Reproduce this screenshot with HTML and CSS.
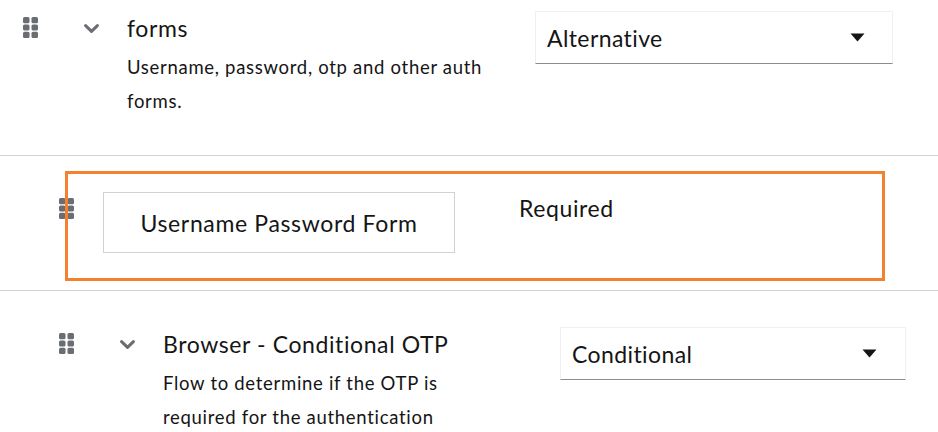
FILE: index.html
```html
<!DOCTYPE html>
<html lang="en">
<head>
<meta charset="utf-8">
<title>Flow</title>
<link rel="stylesheet" href="styles.css">
</head>
<body>
<ul class="flow-list">
  <li class="row row-top">
    <span class="drag">
      <svg width="15" height="21" viewBox="0 0 15 21"><rect x="0" y="0" width="6.5" height="6.2" rx="1.5"/><rect x="8.5" y="0" width="6.5" height="6.2" rx="1.5"/><rect x="0" y="7.4" width="6.5" height="6.2" rx="1.5"/><rect x="8.5" y="7.4" width="6.5" height="6.2" rx="1.5"/><rect x="0" y="14.8" width="6.5" height="6.2" rx="1.5"/><rect x="8.5" y="14.8" width="6.5" height="6.2" rx="1.5"/></svg>
    </span>
    <span class="toggle">
      <svg width="15" height="9" viewBox="0 0 15 9"><path d="M1.6 1.6 L7.5 7.3 L13.4 1.6" fill="none" stroke-width="3" stroke-linecap="round" stroke-linejoin="round"/></svg>
    </span>
    <div class="text text-top">
      <div class="title">forms</div>
      <div class="desc">Username, password, otp and other auth forms.</div>
    </div>
    <div class="select select-top">
      <span>Alternative</span>
      <svg class="caret" width="15" height="9" viewBox="0 0 15 9"><path d="M0.5 0.5 H14.5 L7.5 8.6 Z"/></svg>
    </div>
  </li>
  <li class="row row-mid">
    <span class="drag">
      <svg width="15" height="21" viewBox="0 0 15 21"><rect x="0" y="0" width="6.5" height="6.2" rx="1.5"/><rect x="8.5" y="0" width="6.5" height="6.2" rx="1.5"/><rect x="0" y="7.4" width="6.5" height="6.2" rx="1.5"/><rect x="8.5" y="7.4" width="6.5" height="6.2" rx="1.5"/><rect x="0" y="14.8" width="6.5" height="6.2" rx="1.5"/><rect x="8.5" y="14.8" width="6.5" height="6.2" rx="1.5"/></svg>
    </span>
    <div class="exec-name">Username Password Form</div>
    <div class="req">Required</div>
  </li>
  <li class="row row-bottom">
    <span class="drag">
      <svg width="15" height="21" viewBox="0 0 15 21"><rect x="0" y="0" width="6.5" height="6.2" rx="1.5"/><rect x="8.5" y="0" width="6.5" height="6.2" rx="1.5"/><rect x="0" y="7.4" width="6.5" height="6.2" rx="1.5"/><rect x="8.5" y="7.4" width="6.5" height="6.2" rx="1.5"/><rect x="0" y="14.8" width="6.5" height="6.2" rx="1.5"/><rect x="8.5" y="14.8" width="6.5" height="6.2" rx="1.5"/></svg>
    </span>
    <span class="toggle">
      <svg width="15" height="9" viewBox="0 0 15 9"><path d="M1.6 1.6 L7.5 7.3 L13.4 1.6" fill="none" stroke-width="3" stroke-linecap="round" stroke-linejoin="round"/></svg>
    </span>
    <div class="text text-bottom">
      <div class="title">Browser - Conditional OTP</div>
      <div class="desc">Flow to determine if the OTP is required for the authentication</div>
    </div>
    <div class="select select-bottom">
      <span>Conditional</span>
      <svg class="caret" width="15" height="9" viewBox="0 0 15 9"><path d="M0.5 0.5 H14.5 L7.5 8.6 Z"/></svg>
    </div>
  </li>
</ul>
</body>
</html>
```
FILE: styles.css
```css
html, body {
  margin: 0;
  padding: 0;
  background: #ffffff;
}
body {
  font-family: Lato, "Liberation Sans", sans-serif;
  color: #151515;
  height: 432px;
  overflow: hidden;
}
.flow-list {
  list-style: none;
  margin: 0;
  padding: 0;
}
.row {
  display: flex;
  align-items: flex-start;
  border-bottom: 1px solid #d2d2d2;
}
.row-top {
  padding: 11px 0 37px 23px;
}
.row-mid {
  position: relative;
  padding: 36px 0 37px 59px;
}
.row-mid::after {
  content: "";
  position: absolute;
  left: 65px;
  top: 15px;
  width: 820px;
  height: 110px;
  box-sizing: border-box;
  border: 3px solid #f4812f;
  pointer-events: none;
}
.row-bottom {
  padding: 36px 0 0 59px;
  border-bottom: none;
}
.drag {
  display: block;
  width: 15px;
  height: 21px;
  margin-top: 6px;
  fill: #6a6e73;
}
.drag svg, .toggle svg, .caret {
  display: block;
}
.toggle {
  display: block;
  width: 15px;
  height: 9px;
  margin: 13px 28px 0 46px;
  stroke: #6a6e73;
}
.text {
  flex: none;
}
.text-top {
  width: 390px;
}
.text-bottom {
  width: 310px;
}
.title {
  font-size: 23px;
  line-height: 33px;
  margin-top: 1px;
  letter-spacing: 0.6px;
}
.desc {
  font-size: 18.5px;
  line-height: 34px;
  margin-top: 5px;
  letter-spacing: 0.7px;
}
.select {
  box-sizing: border-box;
  height: 53px;
  display: flex;
  align-items: center;
  justify-content: space-between;
  border: 1px solid #f0f0f0;
  border-bottom-color: #8a8d90;
  font-size: 23px;
  letter-spacing: 0.4px;
  padding-left: 11px;
  fill: #151515;
}
.select-top {
  width: 358px;
  margin-left: 18px;
  padding-right: 27px;
}
.select-bottom {
  width: 346px;
  margin-left: 87px;
  padding-right: 28px;
}
.exec-name {
  box-sizing: border-box;
  width: 352px;
  height: 61px;
  margin-left: 29px;
  border: 1px solid #d2d2d2;
  display: flex;
  align-items: center;
  justify-content: center;
  font-size: 23px;
  letter-spacing: 0.65px;
}
.req {
  margin-left: 64px;
  font-size: 23px;
  line-height: 33px;
  letter-spacing: 0.6px;
}
```
